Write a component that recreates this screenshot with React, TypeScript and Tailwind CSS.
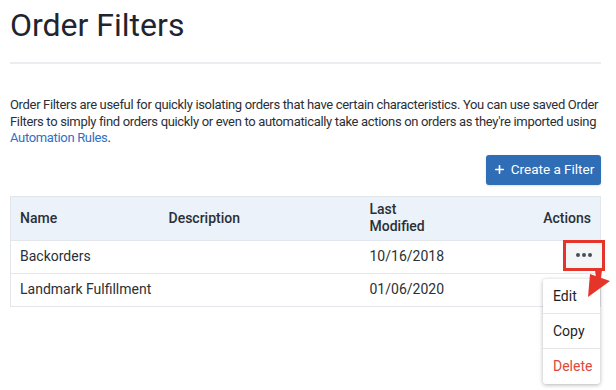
import { Plus } from "lucide-react";

const rows = [
  { name: "Backorders", description: "", modified: "10/16/2018" },
  { name: "Landmark Fulfillment", description: "", modified: "01/06/2020" },
];

export default function App() {
  return (
    <div className="w-[616px] h-[390px] overflow-hidden bg-white font-['Roboto',sans-serif] text-[#2b2f36]">
      <div className="px-[10px] pr-[15px]">
        <h1 className="pt-[3px] text-[32px] leading-[44px] font-normal text-[#1f2530]">Order Filters</h1>
        <div className="mt-[15px] h-[2px] bg-[#ececf1]" />

        <p className="mt-[33px] whitespace-nowrap text-[13px] leading-[16.5px] tracking-[-0.33px] text-[#2b2f36]">
          Order Filters are useful for quickly isolating orders that have certain characteristics. You can use saved Order
          <br />
          Filters to simply find orders quickly or even to automatically take actions on orders as they're imported using
          <br />
          <a className="text-[#2f6fc4]">Automation Rules</a>.
        </p>

        <div className="mt-[8px] flex justify-end">
          <button className="flex h-[30px] w-[115px] items-center justify-center gap-[5px] rounded-[3px] bg-[#2f6db7] text-[13.5px] text-white shadow-sm">
            <Plus size={13} strokeWidth={3} />
            Create a Filter
          </button>
        </div>

        <div className="relative mt-[11px]">
          <table className="w-full table-fixed border-collapse border border-[#e3e6ea] text-[14px]">
            <colgroup>
              <col className="w-[149px]" />
              <col className="w-[201px]" />
              <col className="w-[110px]" />
              <col />
            </colgroup>
            <thead>
              <tr className="h-[44px] bg-[#ebf2f9] text-left font-medium text-[#2b2f36]">
                <th className="px-[9px] font-medium">Name</th>
                <th className="px-[9px] font-medium">Description</th>
                <th className="px-[9px] font-medium leading-[17px]">
                  Last
                  <br />
                  Modified
                </th>
                <th className="px-[9px] text-right font-medium">Actions</th>
              </tr>
            </thead>
            <tbody>
              {rows.map((r) => (
                <tr key={r.name} className="h-[33px] border-t border-[#e3e6ea]">
                  <td className="whitespace-nowrap px-[9px]">{r.name}</td>
                  <td className="px-[9px]">{r.description}</td>
                  <td className="px-[9px]">{r.modified}</td>
                  <td className="px-[9px]" />
                </tr>
              ))}
            </tbody>
          </table>

          {/* highlighted actions button */}
          <div className="absolute left-[553px] top-[44px] flex h-[31px] w-[42px] items-center justify-center border-[3px] border-[#e5342a] bg-[#f4f5f7]">
            <span className="flex gap-[2px]">
              <span className="h-[4px] w-[4px] rounded-full bg-[#4a4f57]" />
              <span className="h-[4px] w-[4px] rounded-full bg-[#4a4f57]" />
              <span className="h-[4px] w-[4px] rounded-full bg-[#4a4f57]" />
            </span>
          </div>

          {/* dropdown menu */}
          <div className="absolute left-[533px] top-[83px] w-[57px] rounded-[3px] bg-white text-[14px] text-[#1e1e1e] shadow-[0_1px_4px_rgba(0,0,0,0.3)]">
            <div className="h-[35px] border-b border-[#e6e6e6] pl-[10px] leading-[35px]">Edit</div>
            <div className="h-[35px] border-b border-[#e6e6e6] pl-[10px] leading-[35px]">Copy</div>
            <div className="h-[35px] pl-[10px] leading-[35px] text-[#e0483a]">Delete</div>
          </div>

          {/* red arrow */}
          <svg className="absolute left-[570px] top-[74px]" width="36" height="32" viewBox="0 0 36 32">
            <polygon points="15,0 22,0 21,8 16,8" fill="#e5342a" />
            <polygon points="10,4 30,11 8,27" fill="#e5342a" />
          </svg>
        </div>
      </div>
    </div>
  );
}
